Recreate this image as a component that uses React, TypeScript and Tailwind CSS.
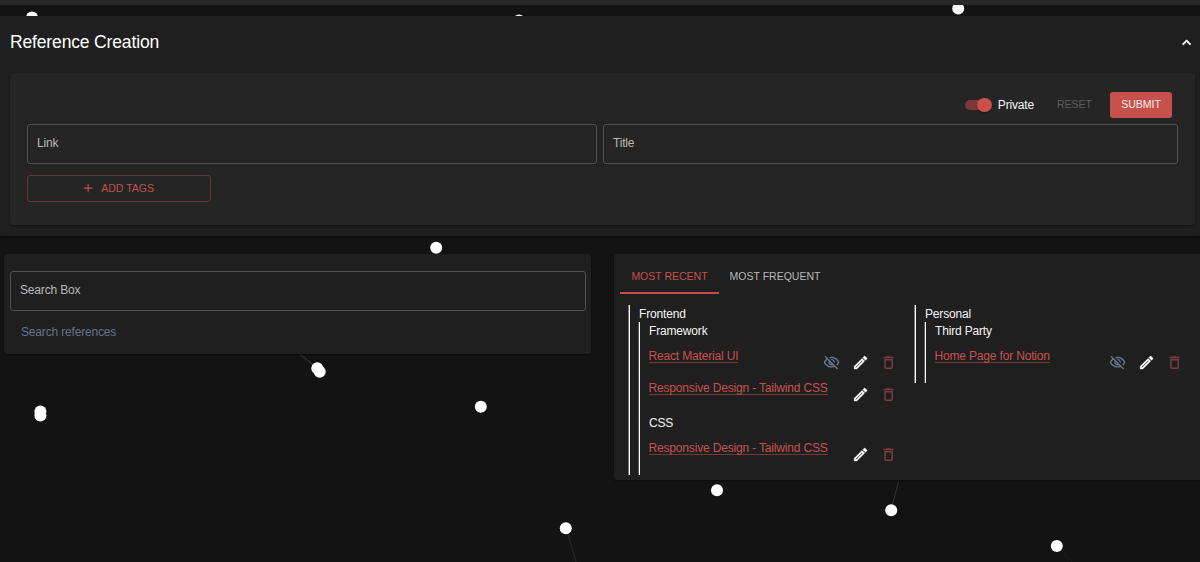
import type { ReactNode } from "react";

const ICONS = {
  eyeOff:
    "M12 6c3.79 0 7.17 2.13 8.82 5.5-.59 1.22-1.42 2.27-2.41 3.12l1.41 1.41c1.39-1.23 2.49-2.77 3.18-4.53C21.27 7.11 17 4 12 4c-1.27 0-2.49.2-3.64.57l1.65 1.65C10.66 6.09 11.32 6 12 6zm-1.07 1.14L13 9.21c.57.25 1.03.71 1.28 1.28l2.07 2.07c.08-.34.14-.7.14-1.07C16.5 9.01 14.48 7 12 7c-.37 0-.72.05-1.07.14zM2.01 3.87l2.68 2.68C3.06 7.83 1.77 9.53 1 11.5 2.73 15.89 7 19 12 19c1.52 0 2.98-.29 4.32-.82l3.42 3.42 1.41-1.41L3.42 2.45 2.01 3.87zm7.5 7.5l2.61 2.61c-.04.01-.08.02-.12.02-1.38 0-2.5-1.12-2.5-2.5 0-.05.01-.08.01-.13zm-3.4-3.4l1.75 1.75c-.23.55-.36 1.15-.36 1.78 0 2.48 2.02 4.5 4.5 4.5.63 0 1.23-.13 1.77-.36l.98.98c-.88.24-1.8.38-2.75.38-3.79 0-7.17-2.13-8.82-5.5.7-1.43 1.72-2.61 2.93-3.53z",
  edit: "m14.06 9.02.92.92L5.92 19H5v-.92l9.06-9.06M17.66 3c-.25 0-.51.1-.7.29l-1.83 1.83 3.75 3.75 1.83-1.83c.39-.39.39-1.02 0-1.41l-2.34-2.34c-.2-.2-.45-.29-.71-.29zm-3.6 3.19L3 17.25V21h3.75L17.81 9.94l-3.75-3.75z",
  trash:
    "M6 19c0 1.1.9 2 2 2h8c1.1 0 2-.9 2-2V7H6v12zM8 9h8v10H8V9zm7.5-5-1-1h-5l-1 1H5v2h14V4h-3.5z",
  plus: "M19 13h-6v6h-2v-6H5v-2h6V5h2v6h6v2z",
  chevronUp: "M12 8l-6 6 1.41 1.41L12 10.83l4.59 4.58L18 14z",
};

function Icon({ name, className }: { name: keyof typeof ICONS; className: string }) {
  return (
    <svg viewBox="0 0 24 24" fill="currentColor" className={`shrink-0 ${className}`} aria-hidden>
      <path d={ICONS[name]} />
    </svg>
  );
}

const dots = [
  [32, 17.5], [519, 20.5], [958.2, 8.5], [436.2, 247.7], [317.3, 368.3], [319.7, 371.8],
  [40.4, 411.5], [40.4, 415.5], [480.8, 406.8], [717, 490.3], [565.8, 528.3], [891.2, 510.3], [1056.8, 546],
];

const links = [
  [298, 353, 317, 368, 0.16],
  [899, 480, 891, 510, 0.14],
  [566, 528, 577, 565, 0.1],
  [1057, 546, 1072, 562, 0.04],
];

function Particles() {
  return (
    <svg className="absolute inset-0" width="1200" height="562" aria-hidden>
      {links.map(([x1, y1, x2, y2, o], i) => (
        <line key={i} x1={x1} y1={y1} x2={x2} y2={y2} stroke="#fff" strokeOpacity={o} />
      ))}
      {dots.map(([cx, cy], i) => (
        <circle key={i} cx={cx} cy={cy} r="6" fill="#fff" />
      ))}
    </svg>
  );
}

function Field({ label, className }: { label: string; className: string }) {
  return (
    <div className={`h-10 rounded-[3px] border border-[#505050] pt-[10px] pl-[9px] leading-[17px] text-[#b9b9b9] ${className}`}>
      {label}
    </div>
  );
}

function Group({ title, children }: { title: string; children: ReactNode }) {
  return (
    <div className="border-l border-white pl-[9px] shadow-[-1px_0_0_rgba(255,255,255,0.4)]">
      <div className="h-[17px] leading-[18px]">{title}</div>
      <div className="border-l border-white pl-[9px] shadow-[-1px_0_0_rgba(255,255,255,0.25)]">{children}</div>
    </div>
  );
}

function Section({ title, children }: { title: string; children: ReactNode }) {
  return (
    <div className="pb-1">
      <div className="mb-[8px] h-[17px] leading-[18px]">{title}</div>
      {children}
    </div>
  );
}

function Reference({ label, hidden }: { label: string; hidden?: boolean }) {
  return (
    <div className="flex h-[31.5px] items-start justify-between">
      <a className="mt-px -ml-[0.5px] h-[15px] border-b border-[#74393a] leading-[17px] tracking-[-0.17px] whitespace-nowrap text-[#c9504f]">
        {label}
      </a>
      <div className="flex h-[31.5px] items-center gap-[11.5px] pr-[4.5px]">
        {hidden && <Icon name="eyeOff" className="size-[17.2px] text-[#64778c]" />}
        <Icon name="edit" className="size-[17.2px] stroke-white stroke-[0.5] text-white" />
        <Icon name="trash" className="size-[17.2px] text-[#7d3d3d]" />
      </div>
    </div>
  );
}

export default function App() {
  return (
    <div className="relative h-[562px] w-[1200px] overflow-hidden bg-[#131313] font-['Liberation_Sans',Arial,sans-serif] text-[12px] tracking-[-0.17px] text-[#f5f5f5]">
      <Particles />
      <div className="relative flex flex-col">
        <header className="h-[5px] bg-[#282828]" />

        <section className="mt-[11px] h-[220px] bg-[#1f1f1f] pr-[5px] pl-[10px] shadow-[0_1px_2px_rgba(0,0,0,0.5)]">
          <div className="flex h-[57px] items-center justify-between pb-[4px]">
            <h1 className="text-[17.5px] tracking-[-0.15px] text-white">Reference Creation</h1>
            <Icon name="chevronUp" className="size-[17.2px] stroke-white stroke-[0.8] text-white" />
          </div>
          <div className="h-[152px] rounded-[3px] bg-[#252525] pt-[19px] pr-[17px] pl-[17px] shadow-[0_1px_2px_rgba(0,0,0,0.5)]">
            <div className="flex h-[26px] items-center justify-end pr-[6px]">
              <div className="flex h-[10px] w-[24px] items-center justify-end rounded-full bg-[#7b3a39]">
                <div className="-mr-[3px] size-[14.5px] rounded-full bg-[#c9504c] shadow-[0_1px_2px_rgba(0,0,0,0.3)]" />
              </div>
              <span className="ml-[9px]">Private</span>
              <span className="ml-[23px] text-[10.5px] tracking-[0px] text-[#5c5c5c]">RESET</span>
              <button className="ml-[18px] h-[26px] w-[62px] rounded-[3px] bg-[#c5504c] text-[10.5px] tracking-[0px] text-[#fbeeee]">
                SUBMIT
              </button>
            </div>
            <div className="mt-[6px] flex gap-[6px]">
              <Field label="Link" className="w-[570px]" />
              <Field label="Title" className="flex-1" />
            </div>
            <button className="mt-[11px] flex h-[27px] w-[184px] items-center justify-center gap-[6px] rounded-[3px] border border-[#663634] pr-[3px] text-[10.5px] tracking-[0px] text-[#c0504d]">
              <Icon name="plus" className="size-[14.3px]" />
              ADD TAGS
            </button>
          </div>
        </section>

        <main className="mt-[18px] flex items-start justify-between pl-[4px]">
          <section className="h-[100px] w-[587px] rounded-[3px] bg-[#1f1f1f] px-[6px] pt-[17px] shadow-[0_1px_2px_rgba(0,0,0,0.5)]">
            <Field label="Search Box" className="w-[576px]" />
            <p className="mt-[13px] pl-[11px] leading-[17px] text-[#64748b]">Search references</p>
          </section>

          <section className="h-[226px] w-[586px] rounded-l-[3px] bg-[#1f1f1f] pt-[6px] pl-[6px] shadow-[0_1px_2px_rgba(0,0,0,0.5)]">
            <nav className="flex h-[34px] text-[10.5px] leading-[32px] tracking-[0px]">
              <div className="w-[99px] border-b-2 border-[#c5504c] text-center text-[#c5504c]">MOST RECENT</div>
              <div className="w-[112px] text-center text-[#b9b9b9]">MOST FREQUENT</div>
            </nav>
            <div className="grid grid-cols-[273px_273px] items-start gap-[13px] pt-[11px] pl-[9px]">
              <Group title="Frontend">
                <Section title="Framework">
                  <Reference label="React Material UI" hidden />
                  <Reference label="Responsive Design - Tailwind CSS" />
                </Section>
                <Section title="CSS">
                  <Reference label="Responsive Design - Tailwind CSS" />
                </Section>
              </Group>
              <Group title="Personal">
                <Section title="Third Party">
                  <Reference label="Home Page for Notion" hidden />
                </Section>
              </Group>
            </div>
          </section>
        </main>
      </div>
    </div>
  );
}
